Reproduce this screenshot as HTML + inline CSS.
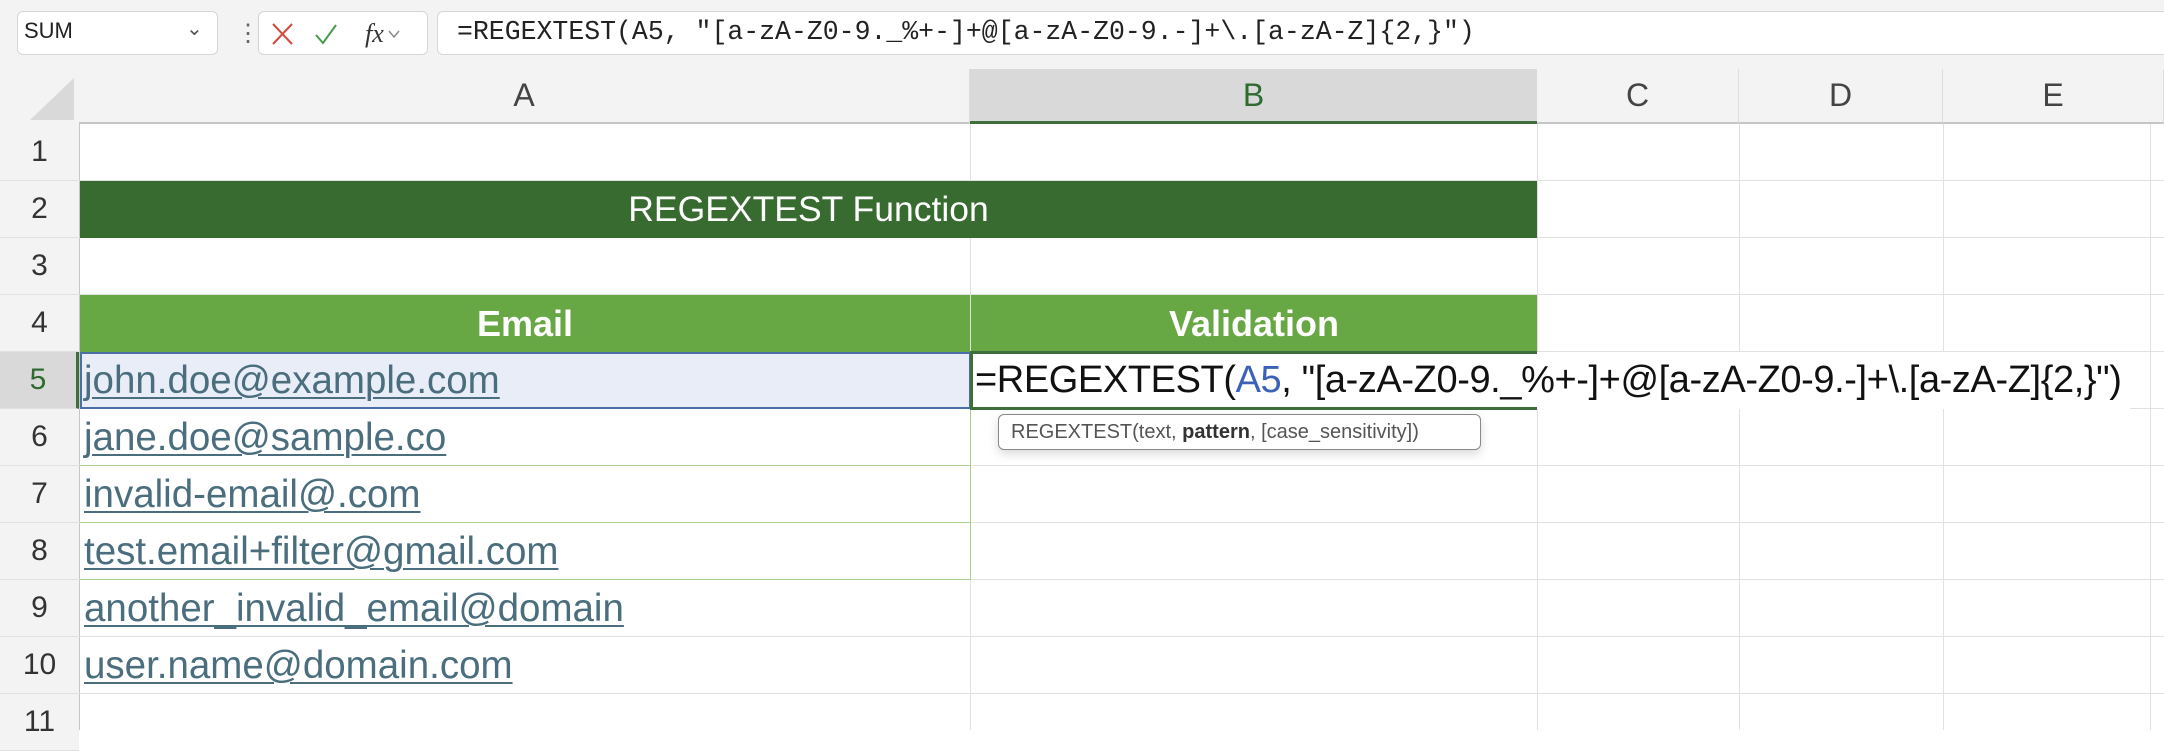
<!DOCTYPE html>
<html><head><meta charset="utf-8"><style>
*{margin:0;padding:0;box-sizing:border-box}
body{width:2164px;height:730px;overflow:hidden;background:#fff;font-family:"Liberation Sans",sans-serif;position:relative}
.a{position:absolute}
.top{left:0;top:0;width:2164px;height:69px;background:#f3f3f3}
.box{background:#fff;border:1px solid #d6d6d6;border-radius:6px}
.hdr{background:#f3f3f3;color:#444;font-size:32px;display:flex;align-items:center;justify-content:center}
.gl{background:#e1e1e1}
.rn{left:0;width:79px;height:57px;font-size:30px;color:#333;display:flex;align-items:center;justify-content:center;background:#f3f3f3;border-bottom:1px solid #e0e0e0}
.em{left:84px;font-size:38.5px;color:#4a6e7d;text-decoration:underline;text-decoration-thickness:2px;text-underline-offset:4px;height:57px;line-height:57px;white-space:nowrap}
</style></head><body>
<div class="a top"></div>
<div class="a box" style="left:17px;top:11px;width:201px;height:44px"></div>
<div class="a" style="left:24px;top:18px;font-size:22px;color:#222">SUM</div>
<div class="a" style="left:186px;top:16px;font-size:20px;color:#555">&#8964;</div>
<div class="a" style="left:236px;top:19px;font-size:24px;color:#666">&#8942;</div>
<div class="a box" style="left:258px;top:11px;width:170px;height:44px"></div>
<svg class="a" style="left:270px;top:20px" width="140" height="28"><path d="M3 4 L22 24 M22 4 L3 24" stroke="#d24a3c" stroke-width="2" fill="none"/><path d="M46 15 L53 23 L66 5" stroke="#4a9c4a" stroke-width="2" fill="none"/><text x="95" y="22" font-family="Liberation Serif" font-style="italic" font-size="26" fill="#333">fx</text><path d="M119 11 L124 17 L129 11" stroke="#888" stroke-width="1.5" fill="none"/></svg>
<div class="a box" style="left:437px;top:11px;width:1740px;height:44px"></div>
<div class="a" style="left:457px;top:17px;font-family:'Liberation Mono',monospace;font-size:26.5px;color:#222;white-space:nowrap">=REGEXTEST(A5, "[a-zA-Z0-9._%+-]+@[a-zA-Z0-9.-]+\.[a-zA-Z]{2,}")</div>

<div class="a hdr" style="left:0;top:69px;width:79px;height:55px"></div>
<svg class="a" style="left:26px;top:78px" width="50" height="44"><path d="M48 0 L48 42 L4 42 Z" fill="#d9d9d9"/></svg>
<div class="a hdr" style="left:79px;top:69px;width:891px;height:55px;border-right:1px solid #ddd;border-bottom:2px solid #c6c6c6">A</div>
<div class="a hdr" style="left:970px;top:69px;width:567px;height:55px;background:#d9d9d9;color:#2f6b2f;border-bottom:3px solid #3d6e3b">B</div>
<div class="a hdr" style="left:1537px;top:69px;width:202px;height:55px;border-right:1px solid #ddd;border-bottom:2px solid #c6c6c6">C</div>
<div class="a hdr" style="left:1739px;top:69px;width:204px;height:55px;border-right:1px solid #ddd;border-bottom:2px solid #c6c6c6">D</div>
<div class="a hdr" style="left:1943px;top:69px;width:221px;height:55px;border-right:1px solid #ddd;border-bottom:2px solid #c6c6c6">E</div>

<div class="a gl" style="left:79px;top:124px;width:1px;height:606px;background:#c6c6c6"></div>
<div class="a gl" style="left:970px;top:124px;width:1px;height:606px"></div>
<div class="a gl" style="left:1537px;top:124px;width:1px;height:606px"></div>
<div class="a gl" style="left:1739px;top:124px;width:1px;height:606px"></div>
<div class="a gl" style="left:1943px;top:124px;width:1px;height:606px"></div>
<div class="a gl" style="left:2150px;top:124px;width:1px;height:606px"></div>
<div class="a gl" style="left:79px;top:180px;width:2085px;height:1px"></div>
<div class="a gl" style="left:79px;top:237px;width:2085px;height:1px"></div>
<div class="a gl" style="left:79px;top:294px;width:2085px;height:1px"></div>
<div class="a gl" style="left:79px;top:351px;width:2085px;height:1px"></div>
<div class="a gl" style="left:79px;top:408px;width:2085px;height:1px"></div>
<div class="a gl" style="left:79px;top:465px;width:2085px;height:1px"></div>
<div class="a gl" style="left:79px;top:522px;width:2085px;height:1px"></div>
<div class="a gl" style="left:79px;top:579px;width:2085px;height:1px"></div>
<div class="a gl" style="left:79px;top:636px;width:2085px;height:1px"></div>
<div class="a gl" style="left:79px;top:693px;width:2085px;height:1px"></div>

<div class="a rn" style="top:124px">1</div>
<div class="a rn" style="top:181px">2</div>
<div class="a rn" style="top:238px">3</div>
<div class="a rn" style="top:295px">4</div>
<div class="a rn" style="top:352px;background:#d9d9d9;color:#2f6b2f;border-right:3px solid #3d6e3b">5</div>
<div class="a rn" style="top:409px">6</div>
<div class="a rn" style="top:466px">7</div>
<div class="a rn" style="top:523px">8</div>
<div class="a rn" style="top:580px">9</div>
<div class="a rn" style="top:637px">10</div>
<div class="a rn" style="top:694px">11</div>

<div class="a" style="left:80px;top:181px;width:1457px;height:57px;background:#386b2f;color:#fff;font-size:35.5px;display:flex;align-items:center;justify-content:center">REGEXTEST Function</div>
<div class="a" style="left:80px;top:295px;width:890px;height:57px;background:#67a744;color:#fff;font-size:36px;font-weight:bold;display:flex;align-items:center;justify-content:center">Email</div>
<div class="a" style="left:971px;top:295px;width:566px;height:57px;background:#67a744;color:#fff;font-size:36px;font-weight:bold;display:flex;align-items:center;justify-content:center">Validation</div>

<div class="a" style="left:970px;top:409px;width:1px;height:171px;background:#a9d18e"></div>
<div class="a" style="left:80px;top:465px;width:890px;height:1px;background:#a9d18e"></div>
<div class="a" style="left:80px;top:522px;width:890px;height:1px;background:#a9d18e"></div>
<div class="a" style="left:80px;top:579px;width:890px;height:1px;background:#a9d18e"></div>

<div class="a" style="left:80px;top:352px;width:891px;height:57px;background:#e9edf7;border:2px solid #4a6ea8"></div>
<div class="a em" style="top:352px">john.doe@example.com</div>
<div class="a em" style="top:409px">jane.doe@sample.co</div>
<div class="a em" style="top:466px">invalid-email@.com</div>
<div class="a em" style="top:523px">test.email+filter@gmail.com</div>
<div class="a em" style="top:580px">another_invalid_email@domain</div>
<div class="a em" style="top:637px">user.name@domain.com</div>

<div class="a" style="left:970px;top:352px;width:1160px;height:57px;background:#fff"></div>
<div class="a" style="left:970px;top:351px;width:567px;height:59px;border:3px solid #3d6e3b;border-right:none"></div>
<div class="a" style="left:975px;top:352px;height:57px;line-height:57px;font-size:38px;color:#111;white-space:nowrap;letter-spacing:-0.4px">=REGEXTEST(<span style="color:#3b62b8">A5</span>, "[a-zA-Z0-9._%+-]+@[a-zA-Z0-9.-]+\.[a-zA-Z]{2,}")</div>

<div class="a" style="left:998px;top:414px;width:483px;height:36px;background:#fff;border:1px solid #888;border-radius:6px;box-shadow:0 4px 10px rgba(0,0,0,.15);font-size:20px;color:#555;line-height:34px;padding-left:12px;white-space:nowrap">REGEXTEST(text, <b style="color:#333">pattern</b>, [case_sensitivity])</div>
</body></html>
